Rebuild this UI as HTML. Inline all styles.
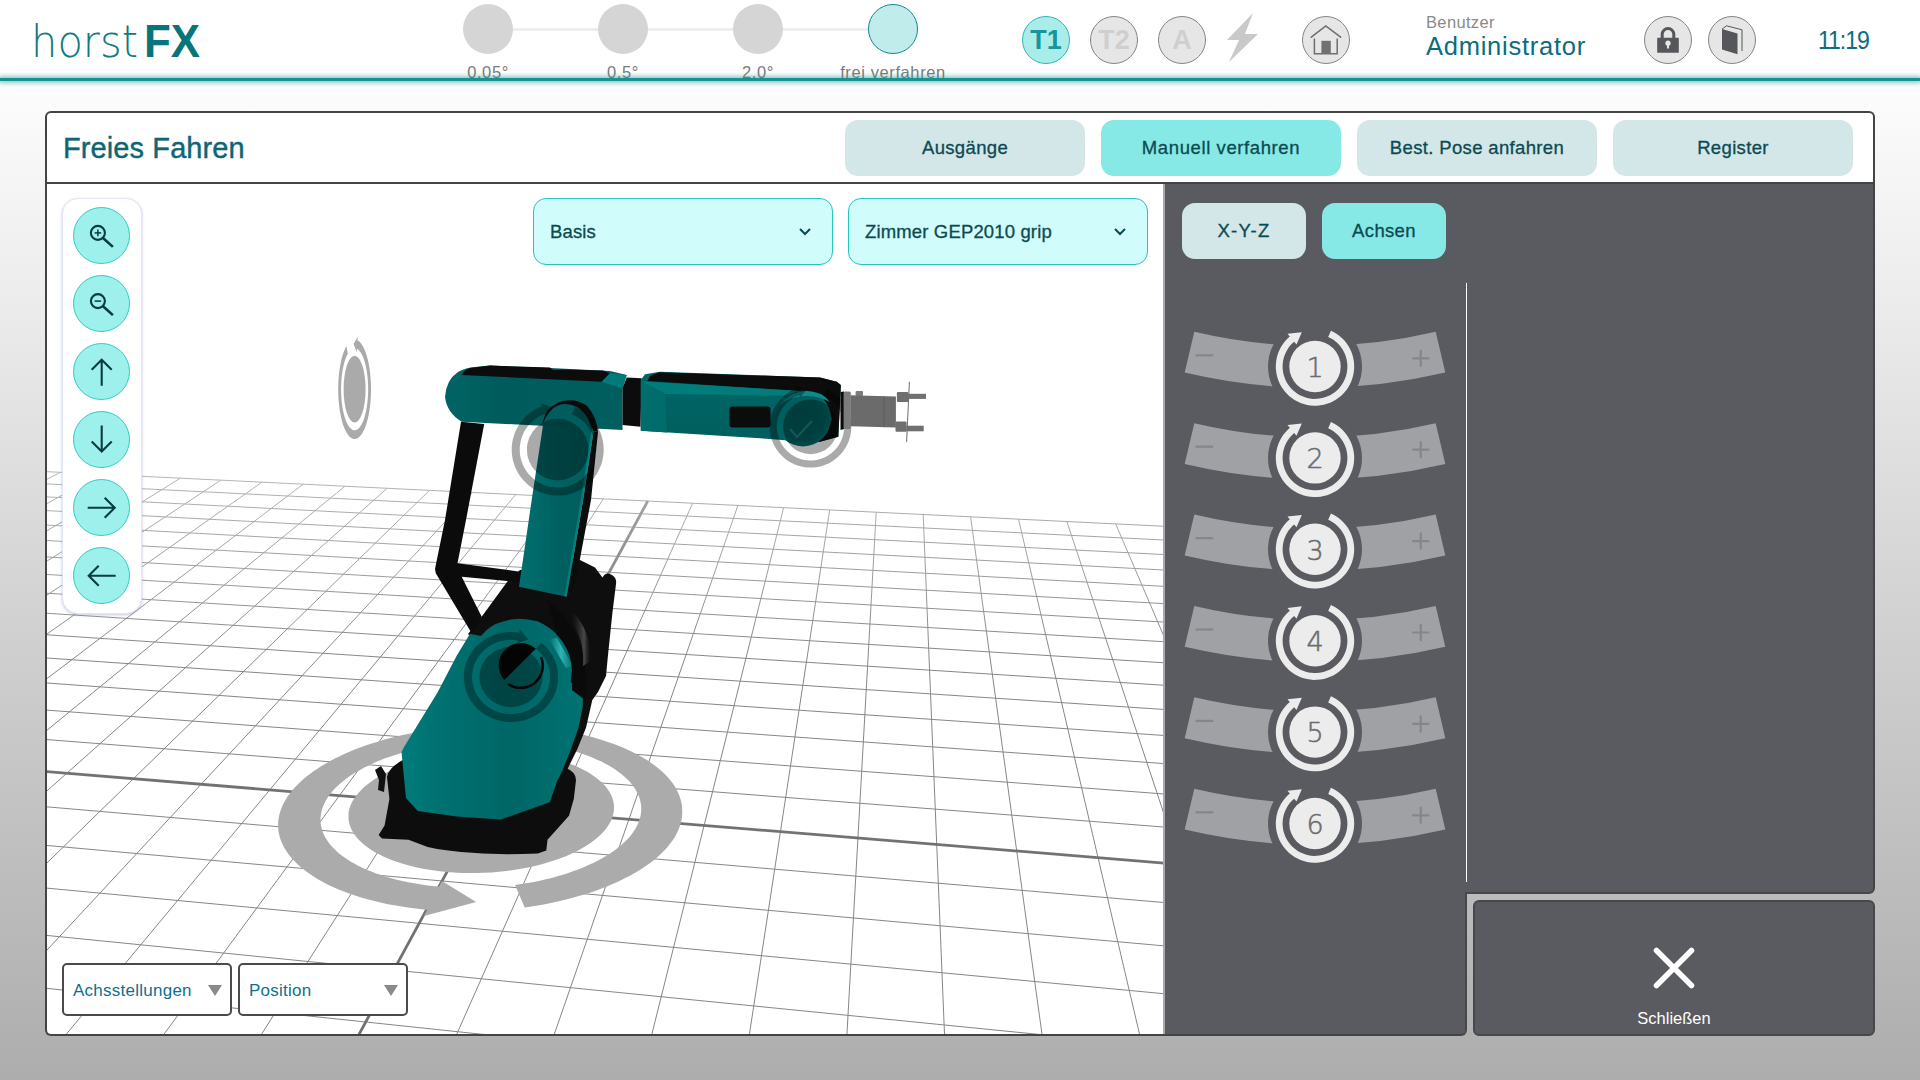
<!DOCTYPE html>
<html lang="de"><head><meta charset="utf-8"><title>horstFX – Freies Fahren</title>
<style>
*{box-sizing:border-box;margin:0;padding:0}
html,body{width:1920px;height:1080px;overflow:hidden}
body{font-family:"Liberation Sans","DejaVu Sans",sans-serif;background:linear-gradient(180deg,#ffffff 0px,#fdfdfd 80px,#ececec 300px,#cfcfcf 650px,#adadad 1080px);position:relative;color:#0c4a52}
.abs{position:absolute}
#hdr{position:absolute;left:0;top:0;width:1920px;height:76px;background:#fff}
#hline{position:absolute;left:0;top:77.5px;width:1920px;height:3px;background:#18918f;box-shadow:0 0 5px 1.5px rgba(30,150,148,.6)}
.stepc{position:absolute;width:50px;height:50px;border-radius:50%;background:#d5d5d5;top:4px}
.stepl{position:absolute;top:64px;width:160px;text-align:center;font-size:16.5px;line-height:16px;color:#7b7b7b;white-space:nowrap;letter-spacing:.6px}
.mode{position:absolute;top:16px;width:48px;height:48px;border-radius:50%;background:#e6e6e6;border:1.5px solid #858585;text-align:center;font-weight:bold;font-size:27px;line-height:46px;color:#cfcfcf}
.tab{-webkit-text-stroke:.3px #0c4a52;letter-spacing:.35px;position:absolute;top:120px;width:240px;height:56px;border-radius:13px;background:#d3e6e8;text-align:center;font-size:18.5px;line-height:56px;color:#0c4a52}
.tab.on{background:#86e9e5}
.sel{-webkit-text-stroke:.3px #0c4a52;letter-spacing:.15px;position:absolute;top:198px;height:67px;border-radius:13px;background:#d0fcfb;border:1.3px solid #27c4c0;font-size:18.5px;line-height:65px;padding-left:16px;color:#0c4a52}
.cbtn{position:absolute;left:73px;width:57px;height:57px;border-radius:50%;background:#9ef0ec;border:1.3px solid #2ecdc6}
.dd{position:absolute;top:963px;width:170px;height:53px;border:2px solid #4a4a4c;border-radius:5px;background:#fff;font-size:17px;line-height:51px;padding-left:9px;color:#0f6f8c;letter-spacing:.25px}
.dd i{position:absolute;right:8px;top:20px;width:0;height:0;border-left:7px solid transparent;border-right:7px solid transparent;border-top:11px solid #8a8a8a}

</style></head>
<body>
<div id="hdr">
 <svg class="abs" style="left:0;top:0" width="260" height="76" viewBox="0 0 260 76">
  <text x="31" y="57" font-family="'DejaVu Sans Light','DejaVu Sans','Liberation Sans',sans-serif" font-weight="200" font-size="45" fill="#0f7a80" textLength="107" lengthAdjust="spacingAndGlyphs">horst</text>
  <text x="144" y="57" font-family="'Liberation Sans',sans-serif" font-weight="bold" font-size="47" fill="#08757b" textLength="56" lengthAdjust="spacingAndGlyphs">FX</text>
 </svg>
 <div class="abs" style="left:488px;top:28px;width:405px;height:3px;background:#eeeeee"></div>
 <div class="stepc" style="left:463px"></div>
 <div class="stepc" style="left:598px"></div>
 <div class="stepc" style="left:733px"></div>
 <div class="stepc" style="left:868px;background:#c1ecec;border:1.5px solid #16868a"></div>
 <div class="stepl" style="left:408px">0.05°</div>
 <div class="stepl" style="left:543px">0.5°</div>
 <div class="stepl" style="left:678px">2.0°</div>
 <div class="stepl" style="left:813px">frei verfahren</div>
 <div class="mode" style="left:1022px;background:#a9edea;border-color:#36b5b0;color:#17959b">T1</div>
 <div class="mode" style="left:1090px">T2</div>
 <div class="mode" style="left:1158px">A</div>
 <svg class="abs" style="left:1222px;top:10px" width="40" height="56" viewBox="0 0 40 56"><path d="M31 3 L5 30 L17 30 L7 52 L36 24 L23 24 Z" fill="#c9c9c9"/></svg>
 <div class="mode" style="left:1302px"></div>
 <svg class="abs" style="left:1302px;top:16px" width="48" height="48" viewBox="0 0 48 48"><path d="M9.3 21.2 L23.8 9.9 L38.6 21.2" fill="none" stroke="#6e6e6e" stroke-width="1.6" stroke-linecap="round"/><path d="M12.4 22.5 V37.7 H35.2 V22.5" fill="none" stroke="#6e6e6e" stroke-width="1.5"/><rect x="19.4" y="24.8" width="9.4" height="12.9" fill="#717171"/></svg>
 <div class="abs" style="left:1426px;top:13px;font-size:16.5px;line-height:18px;color:#8a8a8a;letter-spacing:.35px">Benutzer</div>
 <div class="abs" style="left:1426px;top:31px;font-size:25.5px;line-height:30px;color:#0b6d7b;letter-spacing:.75px">Administrator</div>
 <div class="mode" style="left:1644px"></div>
 <svg class="abs" style="left:1644px;top:16px" width="48" height="48" viewBox="0 0 48 48"><path d="M18.2 23 V18.3 a5.8 5.8 0 0 1 11.6 0 V23" fill="none" stroke="#56575b" stroke-width="3"/><rect x="13.2" y="21.8" width="21.6" height="15" rx=".6" fill="#56575b"/><circle cx="24" cy="27.2" r="2.6" fill="#e6e6e6"/><rect x="23" y="27.5" width="2" height="5" fill="#e6e6e6"/></svg>
 <div class="mode" style="left:1708px"></div>
 <svg class="abs" style="left:1708px;top:16px" width="48" height="48" viewBox="0 0 48 48"><path d="M14 13.2 L18.5 9.8 L34 13.8 V35" fill="none" stroke="#56575b" stroke-width="1"/><path d="M14 13 L29.5 17.5 V38.2 L14 33.5 Z" fill="#56575b"/></svg>
 <div class="abs" style="left:1817.5px;top:25px;font-size:26.5px;line-height:30px;color:#0b6d7b;letter-spacing:-1.2px;transform:scaleX(.87);transform-origin:0 50%">11:19</div>
</div>
<div id="hline"></div>

<div class="abs" style="left:47px;top:113px;width:1826px;height:69px;background:#fff;border-radius:4px 4px 0 0"></div>
<div class="abs" style="left:47px;top:182px;width:1826px;height:2px;background:#444446"></div>
<div class="abs" style="left:63px;top:130px;font-size:29px;line-height:36px;color:#0e6674;letter-spacing:.1px;-webkit-text-stroke:.4px #0e6674">Freies Fahren</div>
<div class="tab" style="left:845px">Ausgänge</div>
<div class="tab on" style="left:1101px;letter-spacing:.6px">Manuell verfahren</div>
<div class="tab" style="left:1357px">Best. Pose anfahren</div>
<div class="tab" style="left:1613px">Register</div>

<div class="abs" style="left:47px;top:184px;width:1117px;height:850px;background:#fff;overflow:hidden;border-radius:0 0 0 4px">
<svg width="1117" height="850" viewBox="47 184 1117 850">
<defs>
<linearGradient id="gBody" x1="0" y1="0" x2="1" y2="0"><stop offset="0" stop-color="#007c7c"/><stop offset=".22" stop-color="#007070"/><stop offset=".6" stop-color="#006666"/><stop offset="1" stop-color="#007272"/></linearGradient>
<linearGradient id="gArm" x1="0" y1="0" x2="1" y2="0"><stop offset="0" stop-color="#007070"/><stop offset=".45" stop-color="#006262"/><stop offset="1" stop-color="#005c5c"/></linearGradient>
<linearGradient id="gL3" x1="0" y1="0" x2="1" y2="0"><stop offset="0" stop-color="#006464"/><stop offset=".3" stop-color="#005c5c"/><stop offset="1" stop-color="#005e5e"/></linearGradient>
<linearGradient id="gL4" x1="0" y1="0" x2="0" y2="1"><stop offset="0" stop-color="#006666"/><stop offset="1" stop-color="#005f5f"/></linearGradient>
<radialGradient id="gCap" cx=".45" cy=".45" r=".6"><stop offset="0" stop-color="#005a5a"/><stop offset=".75" stop-color="#006060"/><stop offset="1" stop-color="#007a7a"/></radialGradient>
<linearGradient id="gFade" gradientUnits="userSpaceOnUse" x1="0" y1="465" x2="0" y2="660"><stop offset="0" stop-color="#fff" stop-opacity=".42"/><stop offset="1" stop-color="#fff" stop-opacity="0"/></linearGradient>
<linearGradient id="gShine" x1="0" y1="0" x2="1" y2="0"><stop offset="0" stop-color="#0e0e0e" stop-opacity="0"/><stop offset=".7" stop-color="#4c4c4c" stop-opacity=".95"/><stop offset="1" stop-color="#2a2a2a" stop-opacity="0"/></linearGradient>
<linearGradient id="gHl" x1="0" y1="0" x2="1" y2="0"><stop offset="0" stop-color="#30b4b4" stop-opacity="0"/><stop offset=".5" stop-color="#38bcbc" stop-opacity=".9"/><stop offset="1" stop-color="#30b4b4" stop-opacity="0"/></linearGradient>
</defs>
<path d="M21.2 470.4L-2440.9 1702.4M21.2 470.4L1367.0 536.2M60.4 472.3L-2331.0 1730.2M-1.0 481.5L1380.4 550.9M100.0 474.2L-2217.5 1758.9M-24.3 493.2L1394.6 566.5M140.0 476.2L-2100.0 1788.6M-48.9 505.5L1409.8 583.1M180.3 478.2L-1978.5 1819.3M-74.8 518.4L1425.8 600.7M220.9 480.1L-1852.7 1851.1M-102.2 532.1L1443.0 619.4M261.9 482.2L-1722.3 1884.0M-131.1 546.6L1461.3 639.4M303.2 484.2L-1587.1 1918.2M-161.8 561.9L1480.8 660.8M345.0 486.2L-1446.9 1953.6M-194.3 578.2L1501.8 683.8M387.1 488.3L-1301.3 1990.4M-228.9 595.5L1524.4 708.5M429.5 490.4L-1150.0 2028.6M-265.7 613.9L1548.8 735.2M472.4 492.5L-992.8 2068.4M-305.0 633.6L1575.1 764.0M515.6 494.6L-829.2 2109.7M-347.0 654.6L1603.7 795.3M559.3 496.7L-658.8 2152.8M-392.1 677.2L1634.8 829.3M603.3 498.9L-481.3 2197.6M-440.5 701.4L1668.9 866.6M692.6 503.2L-102.7 2293.3M-549.1 755.8L1747.4 952.5M737.9 505.4L99.4 2344.3M-610.3 786.4L1793.0 1002.4M783.6 507.7L310.7 2397.7M-676.8 819.7L1843.9 1058.0M829.7 509.9L532.1 2453.7M-749.4 856.0L1900.9 1120.4M876.2 512.2L764.1 2512.3M-829.1 895.9L1965.2 1190.8M923.2 514.5L1007.6 2573.8M-916.8 939.8L2038.5 1271.0M970.6 516.8L1263.4 2638.5M-1013.9 988.4L2122.6 1363.0M1018.5 519.2L1532.6 2706.5M-1121.9 1042.4L2220.1 1469.7M1066.9 521.6L1816.1 2778.1M-1242.9 1102.9L2334.6 1595.0M1115.7 523.9L2115.2 2853.7M-1379.1 1171.1L2471.0 1744.2M1165.0 526.4L2431.2 2933.6M-1533.9 1248.6L2636.0 1924.8M1214.7 528.8L2765.6 3018.1M-1711.2 1337.3L2839.9 2147.8M1265.0 531.2L3120.0 3107.6M-1916.2 1439.9L3098.1 2430.4M1315.7 533.7L3496.2 3202.7M-2156.2 1560.0L3435.8 2799.9M1367.0 536.2L3896.4 3303.8M-2440.9 1702.4L3896.4 3303.8" fill="none" stroke="#868686" stroke-width="1"/>
<path d="M647.8 501.0L-296.1 2244.4M-492.7 727.5L1706.2 907.4" fill="none" stroke="#727272" stroke-width="2.8"/>
<rect x="47" y="460" width="1117" height="200" fill="url(#gFade)"/>
<polygon points="612.1,817.9 610.8,821.1 609.0,824.3 606.9,827.5 604.4,830.7 601.6,833.8 598.4,836.8 594.8,839.8 590.9,842.7 586.6,845.6 582.0,848.3 577.1,850.9 571.9,853.5 566.4,855.9 560.6,858.2 554.5,860.3 548.2,862.3 541.7,864.2 535.0,865.9 528.1,867.4 521.0,868.8 513.8,870.0 506.5,870.9 499.1,871.8 491.6,872.4 484.1,872.8 476.6,873.0 469.1,873.1 461.6,872.9 454.2,872.5 446.9,872.0 439.7,871.3 432.7,870.3 425.8,869.2 419.1,867.9 412.6,866.4 406.3,864.8 400.3,863.0 394.5,861.1 389.1,859.0 383.9,856.7 379.0,854.3 374.5,851.9 370.3,849.2 366.4,846.5 363.0,843.7 359.8,840.8 357.1,837.9 354.7,834.8 352.7,831.8 351.1,828.6 349.8,825.5 349.0,822.3 348.5,819.1 348.4,815.8 348.6,812.6 349.2,809.4 350.2,806.2 351.6,803.1 353.2,800.0 355.2,796.9 357.6,793.9 360.2,790.9 363.2,788.0 366.4,785.2 370.0,782.5 373.8,779.8 377.8,777.3 382.1,774.8 386.7,772.4 391.4,770.2 396.4,768.0 401.6,766.0 406.9,764.1 412.4,762.3 418.1,760.6 423.9,759.0 429.8,757.6 435.9,756.3 442.0,755.2 448.2,754.2 454.5,753.3 460.9,752.6 467.3,752.0 473.7,751.5 480.1,751.2 486.5,751.0 493.0,751.0 499.4,751.1 505.7,751.4 512.0,751.8 518.2,752.3 524.4,753.0 530.4,753.9 536.4,754.8 542.2,755.9 547.9,757.2 553.4,758.5 558.8,760.0 564.0,761.7 569.0,763.4 573.8,765.3 578.4,767.3 582.8,769.4 586.9,771.6 590.8,774.0 594.4,776.4 597.7,778.9 600.8,781.5 603.6,784.3 606.0,787.0 608.2,789.9 610.0,792.8 611.5,795.8 612.7,798.9 613.5,802.0 613.9,805.1 614.0,808.3 613.8,811.5 613.1,814.7 612.1,817.9" fill="#ababab"/>
<polygon points="441.9,910.9 433.7,910.3 425.6,909.7 417.6,908.8 409.6,907.8 401.9,906.6 394.2,905.3 386.7,903.9 379.4,902.3 372.3,900.6 365.4,898.7 358.6,896.7 352.1,894.6 345.9,892.3 339.8,889.9 334.1,887.5 328.5,884.9 323.3,882.2 318.3,879.4 313.6,876.5 309.1,873.6 305.0,870.6 301.1,867.5 297.6,864.3 294.3,861.1 291.3,857.8 288.7,854.5 286.3,851.1 284.2,847.7 282.5,844.3 281.0,840.8 279.8,837.3 279.0,833.8 278.4,830.4 278.1,826.9 278.1,823.4 278.4,819.9 279.0,816.4 279.8,813.0 280.9,809.5 282.3,806.1 283.9,802.7 285.8,799.4 287.9,796.1 290.3,792.9 292.9,789.6 295.7,786.5 298.8,783.4 302.1,780.3 305.6,777.3 309.3,774.4 313.2,771.6 317.3,768.8 321.5,766.0 326.0,763.4 330.6,760.8 335.3,758.3 340.3,755.9 345.3,753.6 350.6,751.3 355.9,749.1 361.4,747.1 367.0,745.1 372.7,743.2 378.5,741.4 384.5,739.6 390.5,738.0 396.6,736.5 402.7,735.0 409.0,733.7 415.3,732.4 421.7,731.3 428.1,730.2 434.6,729.2 441.2,728.4 447.7,727.6 454.3,726.9 460.9,726.4 467.5,725.9 474.2,725.5 480.8,725.3 487.5,725.1 494.1,725.1 500.7,725.1 507.3,725.2 513.9,725.5 520.4,725.8 526.9,726.2 533.3,726.8 539.7,727.4 546.1,728.2 552.3,729.0 558.5,729.9 564.7,731.0 570.7,732.1 576.6,733.3 582.5,734.6 588.2,736.1 593.9,737.6 599.4,739.2 604.8,740.9 610.1,742.7 615.3,744.6 620.3,746.5 625.1,748.6 629.8,750.7 634.4,753.0 638.8,755.3 643.0,757.7 647.0,760.1 650.8,762.7 654.5,765.3 657.9,768.0 661.2,770.8 664.2,773.6 667.1,776.5 669.7,779.5 672.1,782.5 674.2,785.6 676.1,788.8 677.8,792.0 679.2,795.2 680.3,798.5 681.2,801.8 681.9,805.2 682.2,808.6 682.3,812.0 682.1,815.5 681.7,818.9 680.9,822.4 679.9,825.9 678.6,829.4 677.0,832.9 675.1,836.4 672.9,839.9 670.4,843.3 667.7,846.8 664.6,850.2 661.2,853.5 657.6,856.9 653.7,860.2 649.5,863.4 645.0,866.6 640.2,869.7 635.2,872.8 629.9,875.7 624.3,878.6 618.5,881.4 612.5,884.1 606.2,886.8 599.7,889.3 593.0,891.7 586.0,893.9 578.9,896.1 571.6,898.1 564.1,900.0 556.5,901.8 548.7,903.5 540.8,905.0 532.8,906.3 524.7,907.5 515.1,885.0 521.4,884.1 527.6,883.0 533.8,881.9 539.8,880.7 545.8,879.3 551.6,877.9 557.3,876.3 562.9,874.7 568.4,872.9 573.6,871.1 578.8,869.2 583.7,867.2 588.5,865.1 593.1,863.0 597.6,860.8 601.8,858.5 605.8,856.1 609.7,853.7 613.3,851.3 616.7,848.8 619.9,846.2 622.9,843.6 625.6,841.0 628.2,838.4 630.5,835.7 632.6,833.0 634.4,830.3 636.1,827.5 637.5,824.8 638.7,822.0 639.6,819.3 640.4,816.5 640.9,813.8 641.2,811.0 641.2,808.3 641.1,805.6 640.7,802.9 640.1,800.3 639.4,797.7 638.4,795.1 637.2,792.5 635.8,790.0 634.2,787.5 632.4,785.0 630.4,782.6 628.3,780.3 625.9,778.0 623.4,775.7 620.7,773.5 617.9,771.4 614.9,769.3 611.7,767.3 608.4,765.3 605.0,763.4 601.4,761.6 597.6,759.9 593.8,758.2 589.8,756.5 585.7,755.0 581.4,753.5 577.1,752.1 572.7,750.8 568.1,749.5 563.5,748.4 558.8,747.3 554.0,746.3 549.1,745.3 544.1,744.5 539.1,743.7 534.0,743.0 528.9,742.4 523.7,741.9 518.5,741.4 513.2,741.0 507.9,740.8 502.6,740.6 497.2,740.5 491.8,740.4 486.4,740.5 481.0,740.6 475.6,740.8 470.2,741.1 464.9,741.5 459.5,742.0 454.1,742.5 448.8,743.2 443.5,743.9 438.3,744.7 433.1,745.6 427.9,746.5 422.8,747.6 417.7,748.7 412.7,749.9 407.8,751.1 403.0,752.5 398.2,753.9 393.6,755.4 389.0,757.0 384.5,758.6 380.1,760.3 375.9,762.1 371.7,763.9 367.7,765.9 363.8,767.8 360.0,769.9 356.4,772.0 352.9,774.1 349.6,776.3 346.4,778.6 343.4,780.9 340.5,783.3 337.9,785.7 335.3,788.1 333.0,790.6 330.9,793.2 328.9,795.8 327.1,798.4 325.6,801.0 324.2,803.7 323.1,806.4 322.1,809.1 321.4,811.8 320.9,814.5 320.6,817.3 320.5,820.0 320.6,822.8 321.0,825.5 321.6,828.3 322.4,831.0 323.5,833.7 324.8,836.4 326.3,839.1 328.1,841.7 330.1,844.4 332.3,846.9 334.8,849.5 337.4,852.0 340.3,854.4 343.5,856.8 346.8,859.1 350.4,861.4 354.2,863.6 358.2,865.7 362.3,867.8 366.7,869.7 371.3,871.6 376.1,873.4 381.0,875.1 386.1,876.8 391.4,878.3 396.8,879.7 402.4,881.0 408.1,882.2 413.9,883.3 419.9,884.3 425.9,885.2 432.1,885.9 438.3,886.6 444.6,887.1 451.0,887.5" fill="#ababab"/>
<polygon points="441.9,880.9 476.1,902 424.1,916.1" fill="#ababab"/>
<g id="robot">
<!-- base flange (black) -->
<path d="M378.6 835 L384.6 825.4 L389.4 799 L387 777 Q388 768 403.7 759.5 L566 768 Q576 772 576 780 L573.8 799 L569 815.8 L547.5 839.8 L546.3 850.6 L537.9 853.5 Q500 855 475.6 853 Q445 851 427.7 847 L408.5 839.8 L382 838.6 Z" fill="#0d0d0d"/>
<path d="M375 770 L381 766 L386 774 L384 792 L378 790 L379 780 Z" fill="#111"/>
<!-- black motor housing behind joint 2 -->
<path d="M468 634 L483.3 614.4 L507.8 581.1 L520 570 L560 566 L580 560 L595 567.5 L602.5 577.5 Q606 571 612 575 Q617 578 616 584 L612.5 612 L608 655 L606 676 L598 692 L592.3 700 L586 727.8 L577.4 749 L566.8 770.4 L557.2 782.5 L545 790 L540 700 Z" fill="#0e0e0e"/>
<!-- parallel linkage (black) -->
<path d="M461 421.7 L484.2 424 L466 520 L457.5 563.3 L520 571.7 L519 582 L461.7 576.7 L481.7 616.7 L471.7 633.3 L435.8 573.3 L435 569 L445 520 Z" fill="#0b0b0b"/>
<!-- teal lower body -->
<path d="M417.7 810.9 L406 798 L401.5 752 L404.2 746.7 L437.5 692.5 L456.7 655.8 L470 633.8 L481 636 Q490 625 500 622.5 Q509 619 518.8 618.8 Q528 618.8 537.5 621.3 Q548 626 556.3 633.8 Q563 641 567.5 650 Q571 658 572.5 666.3 L570.5 682 L582.8 691.5 L582.8 706.5 L578.5 727.8 L571 749 L562.5 770.4 L557.2 781 L549.7 802.3 L500.8 819.4 L456.7 816.5 Z" fill="url(#gBody)"/>
<path d="M404.2 746.7 L520 700 L575 705 L572.5 730 L556.7 781.7 L548.3 805 L506.7 819.7 L456.7 817.5 L420 811.7 L406.7 798.3 L401.7 755 Z" fill="#006a6a" opacity=".0"/>
<path d="M548 600 L566 618 Q590 650 585 700 L572 690 Q575 650 556 634 Z" fill="#0a0a0a"/>
<path d="M549 639 L557 638 L573 666 L566 668 Z" fill="url(#gHl)"/>
<path d="M574 613 Q591 632 590.5 661 L583 666 Q585 638 569 620 Z" fill="url(#gShine)"/>
<!-- joint2 hole -->
<path d="M504.3 680 A22.2 22.2 0 0 1 535.8 648.8 Z" fill="#060606"/>
<path d="M508 684 A22.2 22.2 0 0 0 541 657" fill="none" stroke="#080808" stroke-width="2.6"/>
<!-- lower arm (teal bar) -->
<path d="M519 586.7 L531.7 500 L543.3 423.3 Q548 409 559 405 Q568 402.5 577 407 Q587 413 590.5 425 L593.5 431 L583 500 L566.7 596.7 Z" fill="url(#gArm)"/>
<path d="M566.7 596.7 L583 500 L593.5 431 L598 432 L591 500 L576 580 L568 600 Z" fill="#0c0c0c"/><path d="M565.6 596.5 L582 500 L592.5 431" fill="none" stroke="#0a8282" stroke-width="2.4" opacity=".85"/>
<!-- link 3 horizontal -->
<path d="M475 367 L490 365.6 L550 368 L610 371 L626.7 375 L622.5 388 L622.5 430 L461.7 421.7 Q447 413 445 397 Q446 380 458 372 Q466 367.5 475 367 Z" fill="url(#gL3)"/>
<path d="M470 368 L490 365.6 L550 367.6 L553 370 L565 369.6 L603 370.6 L610 373.3 L601.7 381.7 L461.7 375 Q464 370 470 368 Z" fill="#0c0c0c"/>
<path d="M601.7 381.7 L610 373.3 L626.7 375 L622.5 388.5 Z" fill="#007a7a"/>
<!-- connector -->
<path d="M626.7 377.5 L641.7 378.3 L640.5 426.7 L622.5 425 L622.5 388 Z" fill="#0c0c0c"/>
<!-- link 4 forearm -->
<path d="M640.8 380 L645 374.2 L660 371.7 L820 377.5 L836.7 381.7 L840.8 385 L840.8 390 L838.3 436.7 L820 441.7 L803.3 441.7 L770 439 L640.8 430.8 Z" fill="url(#gL4)"/>
<path d="M650 376 L659 372.2 L820 377.5 L836.7 381.7 L840.8 385 L838.3 436.7 L820 441.7 L800 441 L832 420 L822 395 L800 391 L647.5 381 Z" fill="#0c0c0c"/>
<path d="M640.8 380.8 L646.7 381.7 L800 391 L810 396 L665 394 Z" fill="#007c7c"/>
<path d="M640.8 380.8 L665 394 L667 432.4 L640.8 430.8 Z" fill="#006c6c"/>
<rect x="729.5" y="406.5" width="41" height="21" rx="3" fill="#0c0c0c"/>
<circle cx="803" cy="418.5" r="28" fill="url(#gCap)"/>
<path d="M779 405 Q790 392 806 391 Q822 391 830 402 Q818 395 804 396 Q790 397 779 405 Z" fill="#0a8a8a"/>
<path d="M790 429 L797 437 L812 421" fill="none" stroke="#3f9ea0" stroke-width="2" opacity=".55"/>
<!-- redraw lower arm top over link3 with dark halo -->
<path d="M543.3 423.3 Q548 409 559 405 Q568 402.5 577 407 Q587 413 590.5 425 L593.5 431 L598 432 Q596.5 416 587 406 Q578 399.3 568 400.3 Q556 401.5 548.5 409.5 Q544.5 415 542.3 423.5 Z" fill="#0b0b0b"/>
</g>

<path transform="translate(511 677) rotate(0) scale(47.2 45)" d="M0.643 -0.766 L0.702 -0.712 L0.757 -0.654 L0.806 -0.591 L0.851 -0.525 L0.890 -0.455 L0.924 -0.383 L0.952 -0.308 L0.973 -0.231 L0.988 -0.152 L0.997 -0.073 L1.000 0.007 L0.996 0.087 L0.986 0.166 L0.970 0.245 L0.947 0.321 L0.918 0.396 L0.884 0.468 L0.843 0.537 L0.798 0.603 L0.747 0.665 L0.692 0.722 L0.632 0.775 L0.568 0.823 L0.500 0.866 L0.429 0.903 L0.356 0.935 L0.280 0.960 L0.202 0.979 L0.123 0.992 L0.044 0.999 L-0.036 0.999 L-0.116 0.993 L-0.195 0.981 L-0.273 0.962 L-0.349 0.937 L-0.423 0.906 L-0.494 0.870 L-0.562 0.827 L-0.626 0.780 L-0.686 0.727 L-0.742 0.670 L-0.793 0.609 L-0.839 0.543 L-0.880 0.475 L-0.915 0.403 L-0.945 0.328 L-0.968 0.252 L-0.985 0.174 L-0.996 0.094 L-1.000 0.015 L-0.998 -0.065 L-0.989 -0.145 L-0.975 -0.224 L-0.954 -0.301 L-0.927 -0.376 L-0.894 -0.449 L-0.855 -0.519 L-0.811 -0.585 L-0.761 -0.648 L-0.707 -0.707 L-0.648 -0.761 L-0.585 -0.811 L-0.519 -0.855 L-0.449 -0.894 L-0.376 -0.927 L-0.301 -0.954 L-0.224 -0.975 L-0.145 -0.989 L-0.065 -0.998 L0.015 -1.000 L0.094 -0.996 L0.174 -0.985 L0.143 -0.812 L0.078 -0.821 L0.012 -0.825 L-0.054 -0.823 L-0.120 -0.816 L-0.184 -0.804 L-0.248 -0.787 L-0.310 -0.764 L-0.370 -0.737 L-0.428 -0.705 L-0.483 -0.669 L-0.535 -0.628 L-0.583 -0.583 L-0.628 -0.535 L-0.669 -0.483 L-0.705 -0.428 L-0.737 -0.370 L-0.764 -0.310 L-0.787 -0.248 L-0.804 -0.184 L-0.816 -0.120 L-0.823 -0.054 L-0.825 0.012 L-0.821 0.078 L-0.812 0.143 L-0.798 0.208 L-0.779 0.271 L-0.755 0.332 L-0.726 0.392 L-0.693 0.448 L-0.655 0.502 L-0.612 0.553 L-0.566 0.600 L-0.516 0.643 L-0.463 0.683 L-0.407 0.717 L-0.349 0.748 L-0.288 0.773 L-0.225 0.794 L-0.161 0.809 L-0.096 0.819 L-0.030 0.824 L0.036 0.824 L0.102 0.819 L0.167 0.808 L0.231 0.792 L0.293 0.771 L0.354 0.745 L0.413 0.714 L0.468 0.679 L0.521 0.640 L0.570 0.596 L0.616 0.548 L0.658 0.497 L0.696 0.443 L0.729 0.386 L0.758 0.327 L0.781 0.265 L0.800 0.202 L0.813 0.137 L0.822 0.072 L0.825 0.006 L0.823 -0.060 L0.815 -0.126 L0.803 -0.190 L0.785 -0.254 L0.762 -0.316 L0.735 -0.376 L0.702 -0.433 L0.665 -0.488 L0.624 -0.539 L0.579 -0.588 L0.530 -0.632ZM0.186 -1.054L0.371 -0.834L0.131 -0.744ZM0.670 0A0.670 0.670 0 1 1 -0.670 0A0.670 0.670 0 1 1 0.670 0Z" fill="#000" fill-opacity="0.335"/>
<path transform="translate(557.7 449.6) rotate(0) scale(46 46)" d="M0.375 -0.927 L0.445 -0.896 L0.513 -0.859 L0.577 -0.817 L0.638 -0.770 L0.696 -0.718 L0.749 -0.663 L0.798 -0.603 L0.842 -0.540 L0.881 -0.473 L0.915 -0.404 L0.943 -0.332 L0.966 -0.259 L0.983 -0.184 L0.994 -0.107 L1.000 -0.031 L0.999 0.047 L0.992 0.123 L0.980 0.199 L0.962 0.274 L0.938 0.347 L0.908 0.419 L0.873 0.487 L0.833 0.553 L0.788 0.616 L0.738 0.675 L0.684 0.729 L0.626 0.780 L0.564 0.826 L0.499 0.867 L0.431 0.903 L0.360 0.933 L0.287 0.958 L0.212 0.977 L0.136 0.991 L0.060 0.998 L-0.017 1.000 L-0.094 0.996 L-0.171 0.985 L-0.246 0.969 L-0.320 0.947 L-0.392 0.920 L-0.462 0.887 L-0.529 0.849 L-0.592 0.806 L-0.653 0.758 L-0.709 0.705 L-0.761 0.648 L-0.809 0.588 L-0.852 0.524 L-0.890 0.457 L-0.922 0.387 L-0.949 0.315 L-0.971 0.241 L-0.986 0.165 L-0.996 0.089 L-1.000 0.012 L-0.998 -0.065 L-0.990 -0.142 L-0.976 -0.218 L-0.956 -0.292 L-0.931 -0.365 L-0.900 -0.436 L-0.864 -0.504 L-0.822 -0.569 L-0.776 -0.630 L-0.725 -0.688 L-0.670 -0.742 L-0.611 -0.792 L-0.548 -0.836 L-0.482 -0.876 L-0.413 -0.911 L-0.342 -0.940 L-0.282 -0.775 L-0.341 -0.751 L-0.398 -0.723 L-0.452 -0.690 L-0.504 -0.653 L-0.553 -0.612 L-0.598 -0.568 L-0.640 -0.520 L-0.679 -0.469 L-0.713 -0.416 L-0.743 -0.359 L-0.768 -0.301 L-0.789 -0.241 L-0.805 -0.180 L-0.817 -0.117 L-0.823 -0.054 L-0.825 0.010 L-0.822 0.073 L-0.814 0.136 L-0.801 0.198 L-0.783 0.259 L-0.761 0.319 L-0.734 0.377 L-0.703 0.432 L-0.667 0.485 L-0.628 0.535 L-0.585 0.582 L-0.539 0.625 L-0.489 0.665 L-0.436 0.700 L-0.381 0.732 L-0.323 0.759 L-0.264 0.782 L-0.203 0.800 L-0.141 0.813 L-0.078 0.821 L-0.014 0.825 L0.049 0.824 L0.112 0.817 L0.175 0.806 L0.237 0.790 L0.297 0.770 L0.355 0.745 L0.411 0.715 L0.465 0.681 L0.516 0.643 L0.564 0.602 L0.609 0.556 L0.650 0.508 L0.687 0.456 L0.720 0.402 L0.749 0.345 L0.774 0.287 L0.793 0.226 L0.808 0.164 L0.819 0.102 L0.824 0.038 L0.825 -0.025 L0.820 -0.089 L0.811 -0.152 L0.797 -0.214 L0.778 -0.274 L0.755 -0.333 L0.727 -0.390 L0.695 -0.445 L0.658 -0.497 L0.618 -0.547 L0.574 -0.593 L0.527 -0.635 L0.476 -0.674 L0.423 -0.708 L0.367 -0.739 L0.309 -0.765ZM-0.366 -1.005L-0.095 -0.908L-0.258 -0.709ZM0.670 0A0.670 0.670 0 1 1 -0.670 0A0.670 0.670 0 1 1 0.670 0Z" fill="#000" fill-opacity="0.335"/>
<path transform="translate(810.5 426.8) rotate(0) scale(40.8 40.8)" d="M0.375 -0.927 L0.445 -0.896 L0.513 -0.859 L0.577 -0.817 L0.638 -0.770 L0.696 -0.718 L0.749 -0.663 L0.798 -0.603 L0.842 -0.540 L0.881 -0.473 L0.915 -0.404 L0.943 -0.332 L0.966 -0.259 L0.983 -0.184 L0.994 -0.107 L1.000 -0.031 L0.999 0.047 L0.992 0.123 L0.980 0.199 L0.962 0.274 L0.938 0.347 L0.908 0.419 L0.873 0.487 L0.833 0.553 L0.788 0.616 L0.738 0.675 L0.684 0.729 L0.626 0.780 L0.564 0.826 L0.499 0.867 L0.431 0.903 L0.360 0.933 L0.287 0.958 L0.212 0.977 L0.136 0.991 L0.060 0.998 L-0.017 1.000 L-0.094 0.996 L-0.171 0.985 L-0.246 0.969 L-0.320 0.947 L-0.392 0.920 L-0.462 0.887 L-0.529 0.849 L-0.592 0.806 L-0.653 0.758 L-0.709 0.705 L-0.761 0.648 L-0.809 0.588 L-0.852 0.524 L-0.890 0.457 L-0.922 0.387 L-0.949 0.315 L-0.971 0.241 L-0.986 0.165 L-0.996 0.089 L-1.000 0.012 L-0.998 -0.065 L-0.990 -0.142 L-0.976 -0.218 L-0.956 -0.292 L-0.931 -0.365 L-0.900 -0.436 L-0.864 -0.504 L-0.822 -0.569 L-0.776 -0.630 L-0.725 -0.688 L-0.670 -0.742 L-0.611 -0.792 L-0.548 -0.836 L-0.482 -0.876 L-0.413 -0.911 L-0.342 -0.940 L-0.282 -0.775 L-0.341 -0.751 L-0.398 -0.723 L-0.452 -0.690 L-0.504 -0.653 L-0.553 -0.612 L-0.598 -0.568 L-0.640 -0.520 L-0.679 -0.469 L-0.713 -0.416 L-0.743 -0.359 L-0.768 -0.301 L-0.789 -0.241 L-0.805 -0.180 L-0.817 -0.117 L-0.823 -0.054 L-0.825 0.010 L-0.822 0.073 L-0.814 0.136 L-0.801 0.198 L-0.783 0.259 L-0.761 0.319 L-0.734 0.377 L-0.703 0.432 L-0.667 0.485 L-0.628 0.535 L-0.585 0.582 L-0.539 0.625 L-0.489 0.665 L-0.436 0.700 L-0.381 0.732 L-0.323 0.759 L-0.264 0.782 L-0.203 0.800 L-0.141 0.813 L-0.078 0.821 L-0.014 0.825 L0.049 0.824 L0.112 0.817 L0.175 0.806 L0.237 0.790 L0.297 0.770 L0.355 0.745 L0.411 0.715 L0.465 0.681 L0.516 0.643 L0.564 0.602 L0.609 0.556 L0.650 0.508 L0.687 0.456 L0.720 0.402 L0.749 0.345 L0.774 0.287 L0.793 0.226 L0.808 0.164 L0.819 0.102 L0.824 0.038 L0.825 -0.025 L0.820 -0.089 L0.811 -0.152 L0.797 -0.214 L0.778 -0.274 L0.755 -0.333 L0.727 -0.390 L0.695 -0.445 L0.658 -0.497 L0.618 -0.547 L0.574 -0.593 L0.527 -0.635 L0.476 -0.674 L0.423 -0.708 L0.367 -0.739 L0.309 -0.765ZM-0.366 -1.005L-0.095 -0.908L-0.258 -0.709ZM0.670 0A0.670 0.670 0 1 1 -0.670 0A0.670 0.670 0 1 1 0.670 0Z" fill="#000" fill-opacity="0.335"/>
<path transform="translate(354.6 389.2) rotate(0) scale(-16.4 49.8)" d="M0.500 -0.866 L0.566 -0.825 L0.628 -0.778 L0.686 -0.727 L0.741 -0.672 L0.790 -0.613 L0.835 -0.550 L0.876 -0.483 L0.910 -0.414 L0.940 -0.342 L0.963 -0.268 L0.981 -0.193 L0.993 -0.116 L0.999 -0.039 L0.999 0.039 L0.993 0.116 L0.981 0.193 L0.963 0.268 L0.940 0.342 L0.910 0.414 L0.876 0.483 L0.835 0.550 L0.790 0.613 L0.741 0.672 L0.686 0.727 L0.628 0.778 L0.566 0.825 L0.500 0.866 L0.431 0.902 L0.360 0.933 L0.287 0.958 L0.212 0.977 L0.135 0.991 L0.058 0.998 L-0.019 1.000 L-0.097 0.995 L-0.174 0.985 L-0.249 0.968 L-0.324 0.946 L-0.396 0.918 L-0.466 0.885 L-0.533 0.846 L-0.597 0.802 L-0.658 0.753 L-0.714 0.700 L-0.766 0.643 L-0.814 0.581 L-0.856 0.517 L-0.894 0.449 L-0.926 0.378 L-0.952 0.305 L-0.973 0.231 L-0.988 0.155 L-0.997 0.077 L-1.000 0.000 L-0.997 -0.077 L-0.988 -0.155 L-0.973 -0.231 L-0.952 -0.305 L-0.926 -0.378 L-0.894 -0.449 L-0.856 -0.517 L-0.814 -0.581 L-0.766 -0.643 L-0.714 -0.700 L-0.658 -0.753 L-0.597 -0.802 L-0.533 -0.846 L-0.466 -0.885 L-0.396 -0.918 L-0.324 -0.946 L-0.249 -0.968 L-0.174 -0.985 L-0.143 -0.812 L-0.206 -0.799 L-0.267 -0.781 L-0.327 -0.758 L-0.384 -0.730 L-0.440 -0.698 L-0.493 -0.662 L-0.542 -0.622 L-0.589 -0.578 L-0.632 -0.530 L-0.671 -0.480 L-0.706 -0.426 L-0.737 -0.370 L-0.764 -0.312 L-0.786 -0.252 L-0.803 -0.190 L-0.815 -0.127 L-0.823 -0.064 L-0.825 0.000 L-0.823 0.064 L-0.815 0.127 L-0.803 0.190 L-0.786 0.252 L-0.764 0.312 L-0.737 0.370 L-0.706 0.426 L-0.671 0.480 L-0.632 0.530 L-0.589 0.578 L-0.542 0.622 L-0.493 0.662 L-0.440 0.698 L-0.384 0.730 L-0.327 0.758 L-0.267 0.781 L-0.206 0.799 L-0.143 0.812 L-0.080 0.821 L-0.016 0.825 L0.048 0.824 L0.112 0.817 L0.175 0.806 L0.237 0.790 L0.297 0.770 L0.356 0.744 L0.413 0.714 L0.467 0.680 L0.518 0.642 L0.566 0.600 L0.611 0.554 L0.652 0.505 L0.689 0.453 L0.722 0.399 L0.751 0.341 L0.775 0.282 L0.795 0.221 L0.810 0.159 L0.819 0.096 L0.824 0.032 L0.824 -0.032 L0.819 -0.096 L0.810 -0.159 L0.795 -0.221 L0.775 -0.282 L0.751 -0.341 L0.722 -0.399 L0.689 -0.453 L0.652 -0.505 L0.611 -0.554 L0.566 -0.600 L0.518 -0.642 L0.467 -0.680 L0.413 -0.714ZM-0.186 -1.054L0.064 -0.910L-0.131 -0.744ZM0.670 0A0.670 0.670 0 1 1 -0.670 0A0.670 0.670 0 1 1 0.670 0Z" fill="#000" fill-opacity="0.335"/>
<g id="gripper">
<path d="M840.5 392 L844 391.5 L844 429 L840.5 430 Z" fill="#0b0b0b"/>
<rect x="843.6" y="391.5" width="7.2" height="37.5" rx="1.5" fill="#7c7c7c"/>
<rect x="855.6" y="391" width="7.4" height="5" rx="1" fill="#7c7c7c"/>
<path d="M850.6 395.2 L895.9 396.6 L895.9 427.6 L850.6 426.2 Z" fill="#6b6b6b"/>
<path d="M884 396.2 L884 427.2" stroke="#5e5e5e" stroke-width="1"/>
<rect x="896.9" y="392" width="11.5" height="10" rx="1.2" fill="#6e6e6e"/>
<rect x="908.2" y="393.8" width="17.8" height="5.1" fill="#707070"/>
<rect x="895.5" y="421.6" width="11.1" height="10.2" rx="1.2" fill="#6e6e6e"/>
<rect x="906.4" y="425.7" width="17.3" height="5.6" fill="#707070"/>
<path d="M909.4 381.8 L906.6 441.9" stroke="#6c6c6c" stroke-width="1"/>
</g>

</svg>
</div>
<div class="abs" style="left:1163px;top:184px;width:2px;height:850px;background:#a9aaac"></div>
<div class="abs" style="left:1165px;top:184px;width:710px;height:710px;background:#5a5b60;border-right:2px solid #444446;border-bottom:2px solid #47484c;border-radius:0 0 6px 0"></div>
<div class="abs" style="left:1165px;top:892px;width:302px;height:144px;background:#5a5b60;border-right:2px solid #47484c;border-bottom:2px solid #444446;border-radius:0 0 6px 0"></div>
<div class="abs" style="left:1465.5px;top:283px;width:1.6px;height:599px;background:#fff"></div>
<div class="abs" style="left:45px;top:111px;width:1830px;height:776px;border:2px solid #444446;border-bottom:none;border-radius:6px 6px 0 0"></div>
<div class="abs" style="left:45px;top:887px;width:1122px;height:149px;border:2px solid #444446;border-top:none;border-right:none;border-radius:0 0 0 6px"></div>

<div class="abs" style="left:1473px;top:900px;width:402px;height:136px;background:#5a5b60;border:2px solid #47484c;border-radius:6px"></div>
<svg class="abs" style="left:1650px;top:944px" width="48" height="48" viewBox="0 0 48 48"><path d="M6.5 6.5 L41.5 41.5 M41.5 6.5 L6.5 41.5" stroke="#fff" stroke-width="5.5" stroke-linecap="round"/></svg>
<div class="abs" style="left:1474px;top:1008px;width:400px;text-align:center;font-size:16.5px;line-height:20px;color:#fff">Schließen</div>

<div class="tab" style="left:1182px;top:203px;width:124px;letter-spacing:1.3px">X-Y-Z</div>
<div class="tab on" style="left:1322px;top:203px;width:124px">Achsen</div>
<svg class="abs" style="left:1165px;top:283px" width="300" height="620" viewBox="1165 283 300 620">
<path d="M1189.50 352.17A547.25 547.25 0 0 0 1440.50 352.17" fill="none" stroke="#a0a1a5" stroke-width="42"/>
<circle cx="1315" cy="366.5" r="47" fill="#5a5b60"/>
<path d="M1330.94 330.69L1333.96 332.19L1336.84 333.95L1339.56 335.95L1342.10 338.18L1344.43 340.61L1346.55 343.24L1348.44 346.04L1350.07 348.99L1351.45 352.07L1352.55 355.26L1353.38 358.53L1353.92 361.86L1354.18 365.22L1354.14 368.60L1353.82 371.96L1353.21 375.27L1352.31 378.53L1351.14 381.69L1349.70 384.74L1348.00 387.66L1346.06 390.42L1343.89 393.00L1341.50 395.39L1338.92 397.56L1336.16 399.50L1333.24 401.20L1330.19 402.64L1327.03 403.81L1323.77 404.71L1320.46 405.32L1317.10 405.64L1313.72 405.68L1310.36 405.42L1307.03 404.88L1303.76 404.05L1300.57 402.95L1297.49 401.57L1294.54 399.94L1291.74 398.05L1289.11 395.93L1286.68 393.60L1284.45 391.06L1282.45 388.34L1280.69 385.46L1279.19 382.44L1277.95 379.31L1276.99 376.07L1276.30 372.77L1275.91 369.42L1275.80 366.04L1275.99 362.67L1276.46 359.33L1277.22 356.05L1278.26 352.84L1279.57 349.73L1281.14 346.74L1282.97 343.90L1285.03 341.23L1287.31 338.75L1289.80 336.47L1294.17 341.68L1292.12 343.56L1290.23 345.62L1288.52 347.82L1287.02 350.17L1285.72 352.64L1284.63 355.21L1283.77 357.86L1283.15 360.58L1282.75 363.34L1282.60 366.12L1282.69 368.91L1283.02 371.68L1283.58 374.41L1284.38 377.08L1285.40 379.68L1286.64 382.17L1288.10 384.56L1289.75 386.80L1291.59 388.90L1293.60 390.83L1295.77 392.58L1298.09 394.14L1300.53 395.49L1303.07 396.62L1305.71 397.54L1308.41 398.22L1311.16 398.67L1313.94 398.88L1316.73 398.85L1319.51 398.58L1322.25 398.08L1324.94 397.34L1327.56 396.37L1330.08 395.18L1332.49 393.78L1334.77 392.17L1336.90 390.38L1338.88 388.40L1340.67 386.27L1342.28 383.99L1343.68 381.58L1344.87 379.06L1345.84 376.44L1346.58 373.75L1347.08 371.01L1347.35 368.23L1347.38 365.44L1347.17 362.66L1346.72 359.91L1346.04 357.21L1345.12 354.57L1343.99 352.03L1342.64 349.59L1341.08 347.27L1339.33 345.10L1337.40 343.09L1335.30 341.25L1333.06 339.60L1330.67 338.14L1328.18 336.90ZM1287.49 333.71L1301.81 332.14L1296.49 344.44Z" fill="#ececec"/>
<circle cx="1315" cy="366.5" r="25.7" fill="#ececec"/>
<text x="1315" y="376.8" text-anchor="middle" font-family="'DejaVu Sans','Liberation Sans',sans-serif" font-weight="200" font-size="27" fill="#6b6c71" stroke="#6b6c71" stroke-width=".55">1</text>
<path d="M1195.5 355.3H1213.2" stroke="#85868b" stroke-width="2.2"/>
<path d="M1412.3 358.3H1429.3M1420.8 349.8V366.8" stroke="#85868b" stroke-width="2.2"/>
<path d="M1189.50 443.57A547.25 547.25 0 0 0 1440.50 443.57" fill="none" stroke="#a0a1a5" stroke-width="42"/>
<circle cx="1315" cy="457.9" r="47" fill="#5a5b60"/>
<path d="M1330.94 422.09L1333.96 423.59L1336.84 425.35L1339.56 427.35L1342.10 429.58L1344.43 432.01L1346.55 434.64L1348.44 437.44L1350.07 440.39L1351.45 443.47L1352.55 446.66L1353.38 449.93L1353.92 453.26L1354.18 456.62L1354.14 460.00L1353.82 463.36L1353.21 466.67L1352.31 469.93L1351.14 473.09L1349.70 476.14L1348.00 479.06L1346.06 481.82L1343.89 484.40L1341.50 486.79L1338.92 488.96L1336.16 490.90L1333.24 492.60L1330.19 494.04L1327.03 495.21L1323.77 496.11L1320.46 496.72L1317.10 497.04L1313.72 497.08L1310.36 496.82L1307.03 496.28L1303.76 495.45L1300.57 494.35L1297.49 492.97L1294.54 491.34L1291.74 489.45L1289.11 487.33L1286.68 485.00L1284.45 482.46L1282.45 479.74L1280.69 476.86L1279.19 473.84L1277.95 470.71L1276.99 467.47L1276.30 464.17L1275.91 460.82L1275.80 457.44L1275.99 454.07L1276.46 450.73L1277.22 447.45L1278.26 444.24L1279.57 441.13L1281.14 438.14L1282.97 435.30L1285.03 432.63L1287.31 430.15L1289.80 427.87L1294.17 433.08L1292.12 434.96L1290.23 437.02L1288.52 439.22L1287.02 441.57L1285.72 444.04L1284.63 446.61L1283.77 449.26L1283.15 451.98L1282.75 454.74L1282.60 457.52L1282.69 460.31L1283.02 463.08L1283.58 465.81L1284.38 468.48L1285.40 471.08L1286.64 473.57L1288.10 475.96L1289.75 478.20L1291.59 480.30L1293.60 482.23L1295.77 483.98L1298.09 485.54L1300.53 486.89L1303.07 488.02L1305.71 488.94L1308.41 489.62L1311.16 490.07L1313.94 490.28L1316.73 490.25L1319.51 489.98L1322.25 489.48L1324.94 488.74L1327.56 487.77L1330.08 486.58L1332.49 485.18L1334.77 483.57L1336.90 481.78L1338.88 479.80L1340.67 477.67L1342.28 475.39L1343.68 472.98L1344.87 470.46L1345.84 467.84L1346.58 465.15L1347.08 462.41L1347.35 459.63L1347.38 456.84L1347.17 454.06L1346.72 451.31L1346.04 448.61L1345.12 445.97L1343.99 443.43L1342.64 440.99L1341.08 438.67L1339.33 436.50L1337.40 434.49L1335.30 432.65L1333.06 431.00L1330.67 429.54L1328.18 428.30ZM1287.49 425.11L1301.81 423.54L1296.49 435.84Z" fill="#ececec"/>
<circle cx="1315" cy="457.9" r="25.7" fill="#ececec"/>
<text x="1315" y="468.2" text-anchor="middle" font-family="'DejaVu Sans','Liberation Sans',sans-serif" font-weight="200" font-size="27" fill="#6b6c71" stroke="#6b6c71" stroke-width=".55">2</text>
<path d="M1195.5 446.7H1213.2" stroke="#85868b" stroke-width="2.2"/>
<path d="M1412.3 449.7H1429.3M1420.8 441.2V458.2" stroke="#85868b" stroke-width="2.2"/>
<path d="M1189.50 534.97A547.25 547.25 0 0 0 1440.50 534.97" fill="none" stroke="#a0a1a5" stroke-width="42"/>
<circle cx="1315" cy="549.3" r="47" fill="#5a5b60"/>
<path d="M1330.94 513.49L1333.96 514.99L1336.84 516.75L1339.56 518.75L1342.10 520.98L1344.43 523.41L1346.55 526.04L1348.44 528.84L1350.07 531.79L1351.45 534.87L1352.55 538.06L1353.38 541.33L1353.92 544.66L1354.18 548.02L1354.14 551.40L1353.82 554.76L1353.21 558.07L1352.31 561.33L1351.14 564.49L1349.70 567.54L1348.00 570.46L1346.06 573.22L1343.89 575.80L1341.50 578.19L1338.92 580.36L1336.16 582.30L1333.24 584.00L1330.19 585.44L1327.03 586.61L1323.77 587.51L1320.46 588.12L1317.10 588.44L1313.72 588.48L1310.36 588.22L1307.03 587.68L1303.76 586.85L1300.57 585.75L1297.49 584.37L1294.54 582.74L1291.74 580.85L1289.11 578.73L1286.68 576.40L1284.45 573.86L1282.45 571.14L1280.69 568.26L1279.19 565.24L1277.95 562.11L1276.99 558.87L1276.30 555.57L1275.91 552.22L1275.80 548.84L1275.99 545.47L1276.46 542.13L1277.22 538.85L1278.26 535.64L1279.57 532.53L1281.14 529.54L1282.97 526.70L1285.03 524.03L1287.31 521.55L1289.80 519.27L1294.17 524.48L1292.12 526.36L1290.23 528.42L1288.52 530.62L1287.02 532.97L1285.72 535.44L1284.63 538.01L1283.77 540.66L1283.15 543.38L1282.75 546.14L1282.60 548.92L1282.69 551.71L1283.02 554.48L1283.58 557.21L1284.38 559.88L1285.40 562.48L1286.64 564.97L1288.10 567.36L1289.75 569.60L1291.59 571.70L1293.60 573.63L1295.77 575.38L1298.09 576.94L1300.53 578.29L1303.07 579.42L1305.71 580.34L1308.41 581.02L1311.16 581.47L1313.94 581.68L1316.73 581.65L1319.51 581.38L1322.25 580.88L1324.94 580.14L1327.56 579.17L1330.08 577.98L1332.49 576.58L1334.77 574.97L1336.90 573.18L1338.88 571.20L1340.67 569.07L1342.28 566.79L1343.68 564.38L1344.87 561.86L1345.84 559.24L1346.58 556.55L1347.08 553.81L1347.35 551.03L1347.38 548.24L1347.17 545.46L1346.72 542.71L1346.04 540.01L1345.12 537.37L1343.99 534.83L1342.64 532.39L1341.08 530.07L1339.33 527.90L1337.40 525.89L1335.30 524.05L1333.06 522.40L1330.67 520.94L1328.18 519.70ZM1287.49 516.51L1301.81 514.94L1296.49 527.24Z" fill="#ececec"/>
<circle cx="1315" cy="549.3" r="25.7" fill="#ececec"/>
<text x="1315" y="559.6" text-anchor="middle" font-family="'DejaVu Sans','Liberation Sans',sans-serif" font-weight="200" font-size="27" fill="#6b6c71" stroke="#6b6c71" stroke-width=".55">3</text>
<path d="M1195.5 538.1H1213.2" stroke="#85868b" stroke-width="2.2"/>
<path d="M1412.3 541.1H1429.3M1420.8 532.6V549.6" stroke="#85868b" stroke-width="2.2"/>
<path d="M1189.50 626.37A547.25 547.25 0 0 0 1440.50 626.37" fill="none" stroke="#a0a1a5" stroke-width="42"/>
<circle cx="1315" cy="640.7" r="47" fill="#5a5b60"/>
<path d="M1330.94 604.89L1333.96 606.39L1336.84 608.15L1339.56 610.15L1342.10 612.38L1344.43 614.81L1346.55 617.44L1348.44 620.24L1350.07 623.19L1351.45 626.27L1352.55 629.46L1353.38 632.73L1353.92 636.06L1354.18 639.42L1354.14 642.80L1353.82 646.16L1353.21 649.47L1352.31 652.73L1351.14 655.89L1349.70 658.94L1348.00 661.86L1346.06 664.62L1343.89 667.20L1341.50 669.59L1338.92 671.76L1336.16 673.70L1333.24 675.40L1330.19 676.84L1327.03 678.01L1323.77 678.91L1320.46 679.52L1317.10 679.84L1313.72 679.88L1310.36 679.62L1307.03 679.08L1303.76 678.25L1300.57 677.15L1297.49 675.77L1294.54 674.14L1291.74 672.25L1289.11 670.13L1286.68 667.80L1284.45 665.26L1282.45 662.54L1280.69 659.66L1279.19 656.64L1277.95 653.51L1276.99 650.27L1276.30 646.97L1275.91 643.62L1275.80 640.24L1275.99 636.87L1276.46 633.53L1277.22 630.25L1278.26 627.04L1279.57 623.93L1281.14 620.94L1282.97 618.10L1285.03 615.43L1287.31 612.95L1289.80 610.67L1294.17 615.88L1292.12 617.76L1290.23 619.82L1288.52 622.02L1287.02 624.37L1285.72 626.84L1284.63 629.41L1283.77 632.06L1283.15 634.78L1282.75 637.54L1282.60 640.32L1282.69 643.11L1283.02 645.88L1283.58 648.61L1284.38 651.28L1285.40 653.88L1286.64 656.37L1288.10 658.76L1289.75 661.00L1291.59 663.10L1293.60 665.03L1295.77 666.78L1298.09 668.34L1300.53 669.69L1303.07 670.82L1305.71 671.74L1308.41 672.42L1311.16 672.87L1313.94 673.08L1316.73 673.05L1319.51 672.78L1322.25 672.28L1324.94 671.54L1327.56 670.57L1330.08 669.38L1332.49 667.98L1334.77 666.37L1336.90 664.58L1338.88 662.60L1340.67 660.47L1342.28 658.19L1343.68 655.78L1344.87 653.26L1345.84 650.64L1346.58 647.95L1347.08 645.21L1347.35 642.43L1347.38 639.64L1347.17 636.86L1346.72 634.11L1346.04 631.41L1345.12 628.77L1343.99 626.23L1342.64 623.79L1341.08 621.47L1339.33 619.30L1337.40 617.29L1335.30 615.45L1333.06 613.80L1330.67 612.34L1328.18 611.10ZM1287.49 607.91L1301.81 606.34L1296.49 618.64Z" fill="#ececec"/>
<circle cx="1315" cy="640.7" r="25.7" fill="#ececec"/>
<text x="1315" y="651.0" text-anchor="middle" font-family="'DejaVu Sans','Liberation Sans',sans-serif" font-weight="200" font-size="27" fill="#6b6c71" stroke="#6b6c71" stroke-width=".55">4</text>
<path d="M1195.5 629.5H1213.2" stroke="#85868b" stroke-width="2.2"/>
<path d="M1412.3 632.5H1429.3M1420.8 624.0V641.0" stroke="#85868b" stroke-width="2.2"/>
<path d="M1189.50 717.77A547.25 547.25 0 0 0 1440.50 717.77" fill="none" stroke="#a0a1a5" stroke-width="42"/>
<circle cx="1315" cy="732.1" r="47" fill="#5a5b60"/>
<path d="M1330.94 696.29L1333.96 697.79L1336.84 699.55L1339.56 701.55L1342.10 703.78L1344.43 706.21L1346.55 708.84L1348.44 711.64L1350.07 714.59L1351.45 717.67L1352.55 720.86L1353.38 724.13L1353.92 727.46L1354.18 730.82L1354.14 734.20L1353.82 737.56L1353.21 740.87L1352.31 744.13L1351.14 747.29L1349.70 750.34L1348.00 753.26L1346.06 756.02L1343.89 758.60L1341.50 760.99L1338.92 763.16L1336.16 765.10L1333.24 766.80L1330.19 768.24L1327.03 769.41L1323.77 770.31L1320.46 770.92L1317.10 771.24L1313.72 771.28L1310.36 771.02L1307.03 770.48L1303.76 769.65L1300.57 768.55L1297.49 767.17L1294.54 765.54L1291.74 763.65L1289.11 761.53L1286.68 759.20L1284.45 756.66L1282.45 753.94L1280.69 751.06L1279.19 748.04L1277.95 744.91L1276.99 741.67L1276.30 738.37L1275.91 735.02L1275.80 731.64L1275.99 728.27L1276.46 724.93L1277.22 721.65L1278.26 718.44L1279.57 715.33L1281.14 712.34L1282.97 709.50L1285.03 706.83L1287.31 704.35L1289.80 702.07L1294.17 707.28L1292.12 709.16L1290.23 711.22L1288.52 713.42L1287.02 715.77L1285.72 718.24L1284.63 720.81L1283.77 723.46L1283.15 726.18L1282.75 728.94L1282.60 731.72L1282.69 734.51L1283.02 737.28L1283.58 740.01L1284.38 742.68L1285.40 745.28L1286.64 747.77L1288.10 750.16L1289.75 752.40L1291.59 754.50L1293.60 756.43L1295.77 758.18L1298.09 759.74L1300.53 761.09L1303.07 762.22L1305.71 763.14L1308.41 763.82L1311.16 764.27L1313.94 764.48L1316.73 764.45L1319.51 764.18L1322.25 763.68L1324.94 762.94L1327.56 761.97L1330.08 760.78L1332.49 759.38L1334.77 757.77L1336.90 755.98L1338.88 754.00L1340.67 751.87L1342.28 749.59L1343.68 747.18L1344.87 744.66L1345.84 742.04L1346.58 739.35L1347.08 736.61L1347.35 733.83L1347.38 731.04L1347.17 728.26L1346.72 725.51L1346.04 722.81L1345.12 720.17L1343.99 717.63L1342.64 715.19L1341.08 712.87L1339.33 710.70L1337.40 708.69L1335.30 706.85L1333.06 705.20L1330.67 703.74L1328.18 702.50ZM1287.49 699.31L1301.81 697.74L1296.49 710.04Z" fill="#ececec"/>
<circle cx="1315" cy="732.1" r="25.7" fill="#ececec"/>
<text x="1315" y="742.4" text-anchor="middle" font-family="'DejaVu Sans','Liberation Sans',sans-serif" font-weight="200" font-size="27" fill="#6b6c71" stroke="#6b6c71" stroke-width=".55">5</text>
<path d="M1195.5 720.9H1213.2" stroke="#85868b" stroke-width="2.2"/>
<path d="M1412.3 723.9H1429.3M1420.8 715.4V732.4" stroke="#85868b" stroke-width="2.2"/>
<path d="M1189.50 809.17A547.25 547.25 0 0 0 1440.50 809.17" fill="none" stroke="#a0a1a5" stroke-width="42"/>
<circle cx="1315" cy="823.5" r="47" fill="#5a5b60"/>
<path d="M1330.94 787.69L1333.96 789.19L1336.84 790.95L1339.56 792.95L1342.10 795.18L1344.43 797.61L1346.55 800.24L1348.44 803.04L1350.07 805.99L1351.45 809.07L1352.55 812.26L1353.38 815.53L1353.92 818.86L1354.18 822.22L1354.14 825.60L1353.82 828.96L1353.21 832.27L1352.31 835.53L1351.14 838.69L1349.70 841.74L1348.00 844.66L1346.06 847.42L1343.89 850.00L1341.50 852.39L1338.92 854.56L1336.16 856.50L1333.24 858.20L1330.19 859.64L1327.03 860.81L1323.77 861.71L1320.46 862.32L1317.10 862.64L1313.72 862.68L1310.36 862.42L1307.03 861.88L1303.76 861.05L1300.57 859.95L1297.49 858.57L1294.54 856.94L1291.74 855.05L1289.11 852.93L1286.68 850.60L1284.45 848.06L1282.45 845.34L1280.69 842.46L1279.19 839.44L1277.95 836.31L1276.99 833.07L1276.30 829.77L1275.91 826.42L1275.80 823.04L1275.99 819.67L1276.46 816.33L1277.22 813.05L1278.26 809.84L1279.57 806.73L1281.14 803.74L1282.97 800.90L1285.03 798.23L1287.31 795.75L1289.80 793.47L1294.17 798.68L1292.12 800.56L1290.23 802.62L1288.52 804.82L1287.02 807.17L1285.72 809.64L1284.63 812.21L1283.77 814.86L1283.15 817.58L1282.75 820.34L1282.60 823.12L1282.69 825.91L1283.02 828.68L1283.58 831.41L1284.38 834.08L1285.40 836.68L1286.64 839.17L1288.10 841.56L1289.75 843.80L1291.59 845.90L1293.60 847.83L1295.77 849.58L1298.09 851.14L1300.53 852.49L1303.07 853.62L1305.71 854.54L1308.41 855.22L1311.16 855.67L1313.94 855.88L1316.73 855.85L1319.51 855.58L1322.25 855.08L1324.94 854.34L1327.56 853.37L1330.08 852.18L1332.49 850.78L1334.77 849.17L1336.90 847.38L1338.88 845.40L1340.67 843.27L1342.28 840.99L1343.68 838.58L1344.87 836.06L1345.84 833.44L1346.58 830.75L1347.08 828.01L1347.35 825.23L1347.38 822.44L1347.17 819.66L1346.72 816.91L1346.04 814.21L1345.12 811.57L1343.99 809.03L1342.64 806.59L1341.08 804.27L1339.33 802.10L1337.40 800.09L1335.30 798.25L1333.06 796.60L1330.67 795.14L1328.18 793.90ZM1287.49 790.71L1301.81 789.14L1296.49 801.44Z" fill="#ececec"/>
<circle cx="1315" cy="823.5" r="25.7" fill="#ececec"/>
<text x="1315" y="833.8" text-anchor="middle" font-family="'DejaVu Sans','Liberation Sans',sans-serif" font-weight="200" font-size="27" fill="#6b6c71" stroke="#6b6c71" stroke-width=".55">6</text>
<path d="M1195.5 812.3H1213.2" stroke="#85868b" stroke-width="2.2"/>
<path d="M1412.3 815.3H1429.3M1420.8 806.8V823.8" stroke="#85868b" stroke-width="2.2"/>
</svg>

<div class="sel" style="left:533px;width:300px">Basis<svg class="abs" style="right:20px;top:28px" width="14" height="10" viewBox="0 0 14 10"><path d="M2 2 L7 7 L12 2" fill="none" stroke="#0c4a52" stroke-width="2"/></svg></div>
<div class="sel" style="left:848px;width:300px">Zimmer GEP2010 grip<svg class="abs" style="right:20px;top:28px" width="14" height="10" viewBox="0 0 14 10"><path d="M2 2 L7 7 L12 2" fill="none" stroke="#0c4a52" stroke-width="2"/></svg></div>

<div class="abs" style="left:62px;top:198px;width:80px;height:416px;border-radius:16px;background:#fff;border:1px solid #e3e6f3;box-shadow:0 1px 3px rgba(120,130,190,.45)"></div>
<div class="cbtn" style="top:207.0px"></div>
<div class="cbtn" style="top:275.2px"></div>
<div class="cbtn" style="top:343.2px"></div>
<div class="cbtn" style="top:411.1px"></div>
<div class="cbtn" style="top:479.3px"></div>
<div class="cbtn" style="top:547.3px"></div>
<svg class="abs" style="left:62px;top:198px" width="80" height="416" viewBox="62 198 80 416" fill="none" stroke="#093c41" stroke-width="2.1">
<circle cx="97.9" cy="232.9" r="7"/><path d="M103.0 238.0L112.9 246.9" stroke-width="2.6"/>
<path d="M94.6 232.9H101.2" stroke-width="1.5"/>
<path d="M97.9 229.6V236.2" stroke-width="1.5"/>
<circle cx="97.9" cy="301.1" r="7"/><path d="M103.0 306.2L112.9 315.1" stroke-width="2.6"/>
<path d="M94.6 301.1H101.2" stroke-width="1.5"/>
<path d="M101.7 385.7V360.2M91.7 369.7L101.7 359.7L111.7 369.7"/>
<path d="M101.7 425.6V451.1M91.7 441.6L101.7 451.6L111.7 441.6"/>
<path d="M87.7 507.8H114.2M104.7 497.8L114.7 507.8L104.7 517.8"/>
<path d="M115.7 575.8H89.2M98.7 565.8L88.7 575.8L98.7 585.8"/>
</svg>
<div class="dd" style="left:62px">Achsstellungen<i></i></div>
<div class="dd" style="left:238px">Position<i></i></div>

</body></html>
